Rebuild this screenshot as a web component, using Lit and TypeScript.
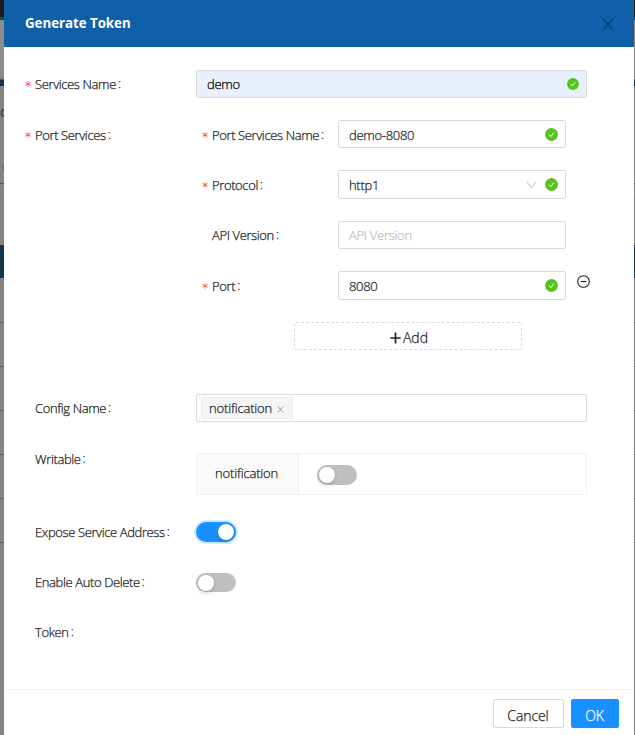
import { LitElement, html, css, svg } from "lit";
import { customElement, property } from "lit/decorators.js";

const okIcon = html`<svg class="ok" viewBox="0 0 13 13">
  <circle cx="6.5" cy="6.5" r="6.4" fill="#52c41a" />
  <path d="M4 6.6 5.8 8.6 9 4.5" fill="none" stroke="#fff" stroke-width="1" />
</svg>`;

const cross = svg`<path d="M1 1 11 12M11 1 1 12" fill="none" stroke="currentColor" stroke-width="1.15" />`;

@customElement("form-label")
class FormLabel extends LitElement {
  @property() text = "";
  @property({ type: Boolean }) required = false;
  static styles = css`
    :host { display: flex; align-items: center; height: 28px; white-space: nowrap; }
    .star { width: 10px; flex: none; color: #ff4d4f; font: 12.5px/28px "DejaVu Sans", sans-serif; padding-top: 2px; box-sizing: border-box; height: 28px; -webkit-text-stroke: 0; }
    .colon { margin: -2px 0 0 2px; }
  `;
  render() {
    return html`<span class="star">${this.required ? "*" : ""}</span><span>${this.text}</span><span class="colon">:</span>`;
  }
}

@customElement("toggle-switch")
class ToggleSwitch extends LitElement {
  @property({ type: Boolean, reflect: true }) on = false;
  static styles = css`
    :host { display: flex; box-sizing: border-box; width: 40px; height: 20px; padding: 2px; border-radius: 10px; background: #bfbfbf; }
    :host([on]) { justify-content: flex-end; background: #1890ff; box-shadow: 0 0 0 2px rgba(24, 144, 255, 0.2); }
    .knob { width: 16px; height: 16px; border-radius: 50%; background: #fff; box-shadow: 0 2px 4px rgba(0, 35, 11, 0.2); }
  `;
  render() {
    return html`<span class="knob"></span>`;
  }
}

@customElement("app-root")
class AppRoot extends LitElement {
  static styles = css`
    :host {
      display: flex; width: 635px; height: 735px; overflow: hidden; box-sizing: border-box;
      color: #1c1c1c; font: 300 13px/20px "Open Sans", "Noto Sans", sans-serif; letter-spacing: -0.38px;
      -webkit-text-stroke: 0.25px currentColor;
    }
    .page {
      flex: none; overflow: hidden; color: #3b3b3b;
      background:
        linear-gradient(#3b5d78, #3b5d78) 0 183px / 100% 1px no-repeat,
        linear-gradient(#6f7f8c, #7a838a) 0 198px / 100% 2px no-repeat,
        repeating-linear-gradient(transparent 0 43px, #47637a 43px 44px) 0 279px / 100% 264px no-repeat,
        linear-gradient(#1a1a1a 17px, #0e4a70 17px 20px, #8c8b8a 20px 76px, #78818a 79px, #12304b 80px 86px, #868482 86px 245px, #15344f 245px 278px, #868482 278px);
    }
    .left { width: 4px; }
    .right { width: 1px; }
    .clip { display: block; width: 20px; font-size: 14px; font-weight: 400; }
    .clip.a { margin-top: 102px; }
    .clip.b { margin: 34px 0 0 1px; color: #6d7379; }
    .modal { flex: none; width: 630px; background: #fff; display: flex; flex-direction: column; }
    .head { box-sizing: border-box; height: 47px; padding: 0 20px 0 21px; background: #115fa9; color: #fff; display: flex; align-items: center; justify-content: space-between; }
    .title { font-weight: 700; font-size: 13.3px; letter-spacing: -0.03px; margin-top: -1px; -webkit-text-stroke: 0; }
    .x { width: 12px; height: 13px; color: #0b3e6e; margin-top: 2px; }
    .form { flex: none; box-sizing: border-box; height: 642px; padding: 23px 47px 0 21px; }
    .row { display: grid; grid-template-columns: 171px 391px; align-items: start; height: 28px; }
    .r1 { margin-bottom: 22px; }
    .group { height: 274px; }
    .group > form-label { margin-top: 1px; }
    .r3 { margin-bottom: 31px; }
    .r4 { height: 69px; }
    .r5 { height: 51px; }
    .r6 { height: 50px; }
    .up { margin-top: -8px; }
    .side { margin-top: -4px; }
    .r6 .side, .r7 .side { margin-top: -5px; }
    .r6 toggle-switch { height: 19px; padding-top: 1.5px; }
    .box { box-sizing: border-box; height: 28px; display: flex; align-items: center; border: 1px solid #d9d9d9; border-radius: 2px; padding: 1px 7px 0 10px; background: #fff; }
    .value { flex: 1; letter-spacing: -0.3px; }
    .filled { background: #e8f0fe; padding: 0 6px 0 10px; color: #000; }
    .tall { height: 29px; }
    .ph { color: #bfbfbf; }
    .ok { width: 13px; height: 13px; flex: none; margin-top: -1px; }
    .filled .ok { width: 12px; height: 12px; margin: 0 1px 0 0; }
    .arrow { width: 11px; height: 8px; margin-right: 8px; }
    .sub { display: grid; grid-template-columns: 136px 228px 28px; align-items: start; height: 50.4px; margin-left: 6px; }
    .sub > form-label { margin-top: 0.6px; }
    .minus { width: 13px; height: 13px; margin: 4px 0 0 11px; }
    .add { box-sizing: border-box; width: 228px; height: 28px; margin-left: 98px; border: 1px dashed #d9d9d9; border-radius: 2px; display: flex; align-items: center; justify-content: center; gap: 2px; padding: 4px 0 0 2px; font-size: 14px; letter-spacing: 0; }
    .plus { width: 11px; height: 12px; }
    .config { padding: 0 4px; }
    .tag { box-sizing: border-box; width: 92px; height: 22px; background: #f5f5f5; border: 1px solid #ececec; border-radius: 2px; display: flex; align-items: center; padding: 0 8px 0 7px; justify-content: space-between; letter-spacing: -0.17px; }
    .tagx { width: 7px; height: 7px; color: #666; margin-top: 2px; }
    .table { box-sizing: border-box; height: 42px; border: 1px solid #f0f0f0; border-radius: 2px; display: grid; grid-template-columns: 102px 1fr; }
    .key { background: #fafafa; border-right: 1px solid #f0f0f0; line-height: 39px; padding-left: 18px; letter-spacing: -0.17px; }
    .cell { padding: 11px 18px 0; }
    .foot { flex: 1; border-top: 1px solid #f0f0f0; display: flex; justify-content: flex-end; gap: 7px; padding: 9px 15px 0 0; }
    .btn { box-sizing: border-box; height: 29px; border: 1px solid #d9d9d9; border-radius: 2px; width: 71px; text-align: center; line-height: 32px; font-size: 14px; letter-spacing: -0.1px; padding-right: 1px; }
    .primary { width: 48px; background: #1890ff; border-color: #1890ff; color: #fff; }
  `;

  render() {
    return html`
      <div class="page left"><span class="clip a">c</span><span class="clip b">u</span></div>
      <div class="modal">
        <div class="head">
          <span class="title">Generate Token</span>
          <svg class="x" viewBox="0 0 12 13">${cross}</svg>
        </div>
        <div class="form">
          <div class="row r1">
            <form-label required text="Services Name"></form-label>
            <div class="box filled"><span class="value">demo</span>${okIcon}</div>
          </div>
          <div class="row group">
            <form-label required text="Port Services"></form-label>
            <div>
              <div class="sub">
                <form-label required text="Port Services Name"></form-label>
                <div class="box"><span class="value">demo-8080</span>${okIcon}</div>
              </div>
              <div class="sub">
                <form-label required text="Protocol"></form-label>
                <div class="box tall">
                  <span class="value">http1</span>
                  <svg class="arrow" viewBox="0 0 11 8"><path d="M.7 .5 5.5 7 10.3 .5" fill="none" stroke="#bfbfbf" /></svg>
                  ${okIcon}
                </div>
              </div>
              <div class="sub">
                <form-label text="API Version"></form-label>
                <div class="box"><span class="value ph">API Version</span></div>
              </div>
              <div class="sub">
                <form-label required text="Port"></form-label>
                <div class="box tall"><span class="value">8080</span>${okIcon}</div>
                <svg class="minus" viewBox="0 0 13 13"><circle cx="6.5" cy="6.5" r="5.8" fill="none" stroke="#222" stroke-width="1.1" /><path d="M3.7 6.5h5.6" stroke="#222" stroke-width="1.1" /></svg>
              </div>
              <div class="add">
                <svg class="plus" viewBox="0 0 11 12"><path d="M5.5 .5v11M.3 6h10.4" stroke="#222" stroke-width="1.7" /></svg>Add
              </div>
            </div>
          </div>
          <div class="row r3">
            <form-label text="Config Name"></form-label>
            <div class="box config"><span class="tag">notification<svg class="tagx" viewBox="0 0 12 13">${cross}</svg></span></div>
          </div>
          <div class="row r4">
            <form-label class="up" text="Writable"></form-label>
            <div class="table"><div class="key">notification</div><div class="cell"><toggle-switch></toggle-switch></div></div>
          </div>
          <div class="row r5">
            <form-label class="side" text="Expose Service Address"></form-label>
            <toggle-switch on></toggle-switch>
          </div>
          <div class="row r6">
            <form-label class="side" text="Enable Auto Delete"></form-label>
            <toggle-switch></toggle-switch>
          </div>
          <div class="row r7"><form-label class="side" text="Token"></form-label></div>
        </div>
        <div class="foot"><div class="btn">Cancel</div><div class="btn primary">OK</div></div>
      </div>
      <div class="page right"></div>
    `;
  }
}
